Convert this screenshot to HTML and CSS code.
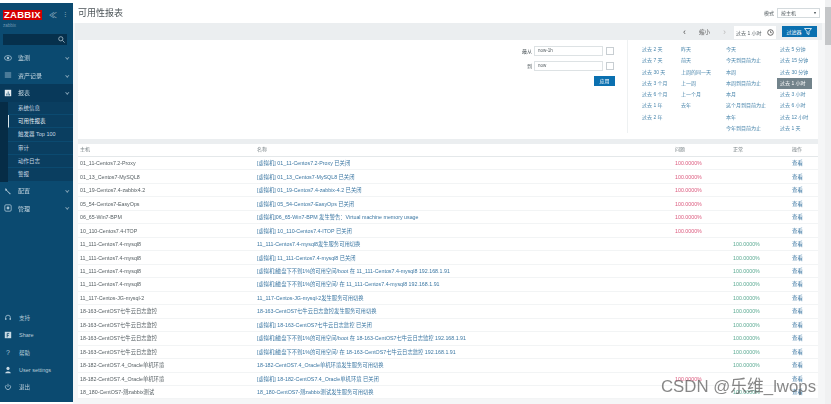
FILE: index.html
```html
<!DOCTYPE html>
<html lang="zh">
<head>
<meta charset="utf-8">
<title>可用性报表</title>
<link rel="stylesheet" href="styles.css">
</head>
<body>
<div class="app">
<aside class="side">
  <div class="brandrow">
    <span class="logo">ZABBIX</span>
    <span class="sidectl">≪</span><span class="sidectl small">⠇</span>
  </div>
  <div class="server">zabbix</div>
  <div class="search"><svg width="7" height="7" viewBox="0 0 8 8"><circle cx="3.2" cy="3.2" r="2.4" fill="none" stroke="#9fb6c4"/><path d="M5 5l2.5 2.5" stroke="#9fb6c4"/></svg></div>
  <nav class="menu">
    <div class="mi"><svg class="ic" viewBox="0 0 10 10"><ellipse cx="5" cy="5" rx="4.4" ry="3" fill="none" stroke="#a9c4d4"/><circle cx="5" cy="5" r="1.5" fill="#a9c4d4"/></svg><span>监测</span><i class="chev"></i></div>
    <div class="mi"><svg class="ic" viewBox="0 0 10 10"><path d="M1 2.500h8M1 5h8M1 7.500h8" stroke="#a9c4d4"/></svg><span>资产记录</span><i class="chev"></i></div>
    <div class="mi on"><svg class="ic" viewBox="0 0 10 10"><rect x="1" y="1" width="8" height="8" fill="#e8eef2"/><path d="M3 8V5.500h1V8zM4.700 8V3h1v5zM6.400 8V6h1v2z" fill="#245a7a"/></svg><span>报表</span><i class="chev up"></i></div>
    <div class="sub">
      <div class="si">系统信息</div>
      <div class="si cur">可用性报表</div>
      <div class="si">触发器 Top 100</div>
      <div class="si">审计</div>
      <div class="si">动作日志</div>
      <div class="si">警报</div>
    </div>
    <div class="mi"><svg class="ic" viewBox="0 0 10 10"><path d="M1.500 1.500l2 1 .5 2 4.500 4-1 1-4-4.500-2-.5z" fill="#a9c4d4"/></svg><span>配置</span><i class="chev"></i></div>
    <div class="mi"><svg class="ic" viewBox="0 0 10 10"><rect x="1" y="1" width="8" height="8" rx="1.500" fill="none" stroke="#a9c4d4"/><circle cx="5" cy="5" r="1.800" fill="#a9c4d4"/></svg><span>管理</span><i class="chev"></i></div>
  </nav>
  <div class="foot">
    <div class="fi"><svg class="ic" viewBox="0 0 10 10"><path d="M2 6V4.500a3 3 0 0 1 6 0V6" fill="none" stroke="#a9c4d4"/><rect x="1.500" y="5" width="1.500" height="2.500" fill="#a9c4d4"/><rect x="7" y="5" width="1.500" height="2.500" fill="#a9c4d4"/></svg><span>支持</span></div>
    <div class="fi"><svg class="ic" viewBox="0 0 10 10"><rect x="1" y="1" width="8" height="8" fill="#c9dae4"/><path d="M4 8V3h2.500M4 5.500h2" stroke="#0d4a6e" fill="none"/></svg><span>Share</span></div>
    <div class="fi"><span class="ic q">?</span><span>帮助</span></div>
    <div class="fi"><svg class="ic" viewBox="0 0 10 10"><circle cx="5" cy="3" r="2" fill="#c9dae4"/><path d="M1.500 9c0-3 7-3 7 0z" fill="#c9dae4"/></svg><span>User settings</span></div>
    <div class="fi"><svg class="ic" viewBox="0 0 10 10"><path d="M3 2.500a3.200 3.200 0 1 0 4 0M5 1v4" fill="none" stroke="#a9c4d4"/></svg><span>退出</span></div>
  </div>
</aside>
<main class="main">
  <header class="head">
    <h1>可用性报表</h1>
    <div class="mode"><label>模式</label><span class="sel">按主机<b>▾</b></span></div>
  </header>
  <div class="bar">
    <span class="arrow">‹</span><span class="zoom">缩小</span><span class="arrow dim">›</span>
    <span class="tab">过去 1 小时 <svg width="7" height="7" viewBox="0 0 8 8"><circle cx="4" cy="4" r="3.200" fill="none" stroke="#555"/><path d="M4 2v2.200h1.600" fill="none" stroke="#555" stroke-width=".8"/></svg></span>
    <span class="btnf">过滤器 <svg width="8" height="7" viewBox="0 0 8 7"><path d="M.5.500h7L5 3.500V6.500L3 5.500V3.500z" fill="none" stroke="#fff" stroke-width=".8"/></svg></span>
  </div>
  <section class="filter">
    <div class="range">
      <div class="frow"><label>最从</label><span class="inp">now-1h</span><span class="cal"></span></div>
      <div class="frow"><label>到</label><span class="inp">now</span><span class="cal"></span></div>
      <div class="frow applyrow"><span class="apply">应用</span></div>
    </div>
    <div class="quick">
      <ul class="q1"><li>过去 2 天</li><li>过去 7 天</li><li>过去 30 天</li><li>过去 3 个月</li><li>过去 6 个月</li><li>过去 1 年</li><li>过去 2 年</li></ul>
      <ul class="q2"><li>昨天</li><li>前天</li><li>上周的同一天</li><li>上一周</li><li>上一个月</li><li>去年</li></ul>
      <ul class="q3"><li>今天</li><li>今天到目前为止</li><li>本周</li><li>本周到目前为止</li><li>本月</li><li>这个月到目前为止</li><li>本年</li><li>今年到目前为止</li></ul>
      <ul class="q4"><li>过去 5 分钟</li><li>过去 15 分钟</li><li>过去 30 分钟</li><li class="act">过去 1 小时</li><li>过去 3 小时</li><li>过去 6 小时</li><li>过去 12 小时</li><li>过去 1 天</li></ul>
    </div>
  </section>
  <table class="tbl">
    <colgroup><col class="c1"><col class="c2"><col class="c3"><col class="c4"><col class="c5"></colgroup>
    <thead><tr><th>主机</th><th>名称</th><th>问题</th><th>正常</th><th>操作</th></tr></thead>
    <tbody>
      <tr><td>01_11-Centos7.2-Proxy</td><td class="l">[虚拟机] 01_11-Centos7.2-Proxy 已关闭</td><td class="r">100.0000%</td><td></td><td class="v">查看</td></tr>
      <tr><td>01_13_Centos7-MySQL8</td><td class="l">[虚拟机] 01_13_Centos7-MySQL8 已关闭</td><td class="r">100.0000%</td><td></td><td class="v">查看</td></tr>
      <tr><td>01_19-Centos7.4-zabbix4.2</td><td class="l">[虚拟机] 01_19-Centos7.4-zabbix-4.2 已关闭</td><td class="r">100.0000%</td><td></td><td class="v">查看</td></tr>
      <tr><td>05_54-Centos7-EasyOps</td><td class="l">[虚拟机] 05_54-Centos7-EasyOps 已关闭</td><td class="r">100.0000%</td><td></td><td class="v">查看</td></tr>
      <tr><td>06_65-Win7-BPM</td><td class="l">[虚拟机]06_65-Win7-BPM 发生警告：Virtual machine memory usage</td><td class="r">100.0000%</td><td></td><td class="v">查看</td></tr>
      <tr><td>10_110-Centos7.4-ITOP</td><td class="l">[虚拟机] 10_110-Centos7.4-ITOP 已关闭</td><td class="r">100.0000%</td><td></td><td class="v">查看</td></tr>
      <tr><td>11_111-Centos7.4-mysql8</td><td class="l">11_111-Centos7.4-mysql8发生服务可用切换</td><td></td><td class="g">100.0000%</td><td class="v">查看</td></tr>
      <tr><td>11_111-Centos7.4-mysql8</td><td class="l">[虚拟机] 11_111-Centos7.4-mysql8 已关闭</td><td></td><td class="g">100.0000%</td><td class="v">查看</td></tr>
      <tr><td>11_111-Centos7.4-mysql8</td><td class="l">[虚拟机]磁盘下不到1%的可用空间/boot 在 11_111-Centos7.4-mysql8 192.168.1.91</td><td></td><td class="g">100.0000%</td><td class="v">查看</td></tr>
      <tr><td>11_111-Centos7.4-mysql8</td><td class="l">[虚拟机]磁盘下不到1%的可用空间/ 在 11_111-Centos7.4-mysql8 192.168.1.91</td><td></td><td class="g">100.0000%</td><td class="v">查看</td></tr>
      <tr><td>11_117-Centos-JG-mysql-2</td><td class="l">11_117-Centos-JG-mysql-2发生服务可用切换</td><td></td><td class="g">100.0000%</td><td class="v">查看</td></tr>
      <tr><td>18-163-CentOS7七牛云日志监控</td><td class="l">18-163-CentOS7七牛云日志监控发生服务可用切换</td><td></td><td class="g">100.0000%</td><td class="v">查看</td></tr>
      <tr><td>18-163-CentOS7七牛云日志监控</td><td class="l">[虚拟机] 18-163-CentOS7七牛云日志监控 已关闭</td><td></td><td class="g">100.0000%</td><td class="v">查看</td></tr>
      <tr><td>18-163-CentOS7七牛云日志监控</td><td class="l">[虚拟机]磁盘下不到1%的可用空间/boot 在 18-163-CentOS7七牛云日志监控 192.168.1.91</td><td></td><td class="g">100.0000%</td><td class="v">查看</td></tr>
      <tr><td>18-163-CentOS7七牛云日志监控</td><td class="l">[虚拟机]磁盘下不到1%的可用空间/ 在 18-163-CentOS7七牛云日志监控 192.168.1.91</td><td></td><td class="g">100.0000%</td><td class="v">查看</td></tr>
      <tr><td>18-182-CentOS7.4_Oracle单机环境</td><td class="l">18-182-CentOS7.4_Oracle单机环境发生服务可用切换</td><td></td><td class="g">100.0000%</td><td class="v">查看</td></tr>
      <tr><td>18-182-CentOS7.4_Oracle单机环境</td><td class="l">[虚拟机] 18-182-CentOS7.4_Oracle单机环境 已关闭</td><td class="r">100.0000%</td><td></td><td class="v">查看</td></tr>
      <tr><td>18_180-CentOS7-测zabbix测试</td><td class="l">18_180-CentOS7-测zabbix测试发生服务可用切换</td><td></td><td class="g">100.0000%</td><td class="v">查看</td></tr>
    </tbody>
  </table>
</main>
<div class="scroll"><span class="thumb"></span></div>
</div>
<div class="mark">CSDN @乐维_lwops</div>
</body>
</html>
```
FILE: styles.css
```css
* { box-sizing: border-box; }
html, body { margin: 0; height: 404px; overflow: hidden; }
body { font: 5.5px "Liberation Sans", "Noto Sans CJK SC", sans-serif; color: #535c60; background: #fff; position: relative; }
.app { display: flex; height: 404px; filter: blur(.45px); }
.side { width: 73px; height: 399px; margin-top: 3px; flex: none; background: #0b4a70; color: #b9ccd8; display: flex; flex-direction: column; }
.brandrow { display: flex; align-items: center; padding: 5px 0 0 3px; height: 18px; }
.logo { background: #d40000; color: #fff; font-size: 9.5px; font-weight: bold; line-height: 10px; padding: 0 1px; letter-spacing: .25px; }
.sidectl { color: #9ab4c4; font-size: 8px; margin-left: 7px; }
.sidectl.small { font-size: 6px; }
.server { padding: 2px 3px 0; font-size: 4.5px; color: #6f97b0; height: 10px; }
.search { margin: 3px 6px 0 3px; height: 11px; background: #06304c; display: flex; align-items: center; justify-content: flex-end; padding-right: 2px; }
.menu { margin-top: 4px; }
.mi { height: 17.500px; display: flex; align-items: center; padding-left: 4px; color: #c8d8e2; font-size: 6px; position: relative; }
.mi.on { background: #08395a; }
.ic { width: 8px; height: 8px; margin-right: 6px; flex: none; }
.q { text-align: center; font-size: 7px; line-height: 8px; color: #a9c4d4; }
.chev { position: absolute; right: 5px; top: 7px; width: 2.500px; height: 2.500px; border-right: .7px solid #7fa0b4; border-bottom: .7px solid #7fa0b4; transform: rotate(45deg); }
.chev.up { transform: rotate(45deg); }
.sub { background: #062c46; padding-left: 8px; }
.si { height: 13.400px; line-height: 13.400px; padding-left: 10px; background: #0a3e60; color: #c8d8e2; border-bottom: 1px solid #0b4a70; font-size: 5.500px; }
.si.cur { border-left: 1px solid #d8e4ea; padding-left: 9px; color: #e8f0f4; }
.foot { margin-top: auto; padding-bottom: 6px; }
.fi { height: 17.300px; display: flex; align-items: center; padding-left: 4px; color: #b9ccd8; font-size: 5.500px; }
.fi .ic { margin-right: 7px; }
.main { flex: 1; min-width: 0; background: #f5f6f7; padding: 0 7px 0 5px; display: flex; flex-direction: column; }
.head { height: 23px; margin: 0 -7px 0 -5px; display: flex; align-items: center; justify-content: space-between; padding: 2px 5px 0 5px; background: #fff; }
.head h1 { margin: 0; font-size: 9px; font-weight: normal; color: #4c5458; }
.mode { display: flex; align-items: center; gap: 3px; font-size: 5px; }
.sel { width: 43px; height: 10px; border: 1px solid #d4dadd; display: flex; justify-content: space-between; align-items: center; padding: 0 3px; }
.sel b { font-size: 4px; }
.bar { height: 17px; margin: 0 -4px 0 -3px; padding-right: 5px; background: #ebeef0; display: flex; align-items: center; justify-content: flex-end; font-size: 5.500px; }
.arrow { font-size: 9px; color: #555; }
.arrow.dim { color: #bbb; margin: 0 8px 0 13px; }
.zoom { margin-left: 13px; color: #555; }
.tab { height: 13px; width: 42px; background: #fff; display: flex; align-items: center; justify-content: space-between; padding: 0 2px; margin-right: 6px; margin-top: 2px; font-size: 5px; }
.btnf { background: #0a70b0; color: #fff; width: 35px; height: 11px; display: flex; align-items: center; justify-content: space-around; padding: 0 3px; font-size: 5px; }
.filter { height: 99px; flex: none; background: #fff; display: flex; }
.range { width: 550px; padding-top: 5px; display: flex; flex-direction: column; gap: 4px; border-right: 1px solid #eef1f2; margin-bottom: 6px; }
.frow { display: flex; justify-content: flex-end; align-items: center; height: 11px; padding-right: 13px; gap: 2px; }
.frow label { font-size: 5px; }
.inp { width: 69px; height: 10px; border: 1px solid #dde2e4; line-height: 8px; padding-left: 3px; font-size: 4.500px; }
.cal { width: 8px; height: 8px; border: 1px solid #c8ced2; margin-left: 1px; }
.applyrow { height: 11px; }
.apply { width: 21px; height: 10px; background: #0a70b0; color: #fff; text-align: center; line-height: 10px; font-size: 5px; margin-right: -1px; }
.quick { flex: 1; display: flex; color: #4a86ac; font-size: 5px; padding: 4px 0 0 14px; }
.quick ul { margin: 0; padding: 0; list-style: none; }
.quick li { height: 11.300px; line-height: 11.300px; white-space: nowrap; }
.q1 { width: 39px; }
.q2 { width: 45px; }
.q3 { width: 54px; }
.q4 { width: 36px; }
.q4 .act { background: #72838b; color: #fff; margin-left: -3px; padding-left: 3px; width: 35px; }
.tbl { width: 740px; border-collapse: collapse; table-layout: fixed; border-top: 5px solid #ebeef0; }
.c1 { width: 177px; } .c2 { width: 418px; } .c3 { width: 58px; } .c4 { width: 59px; } .c5 { width: 28px; }
.tbl th { height: 15px; background: #fff; color: #7a8488; font-weight: normal; font-size: 5px; text-align: left; padding: 0 0 3px 2px; border-bottom: 1px solid #e4e8ea; }
.tbl td { height: 13.470px; padding: 0 0 0 2px; background: #fff; border-bottom: 1px solid #f2f4f5; white-space: nowrap; overflow: hidden; font-size: 5.300px; }
.tbl tr { height: 13.470px; }
.l { color: #3a76a2; }
.r { color: #dc5a7e; }
.g { color: #5aaa92; }
.v { color: #3a76a2; font-size: 5.500px !important; }
.scroll { width: 6px; flex: none; background: #f0f1f2; padding-top: 7px; }
.thumb { display: block; height: 38px; background: #c4c6c8; }
.mark { position: absolute; left: 661px; top: 373px; font-size: 16.800px; color: rgba(70,70,70,.65); white-space: nowrap; }
```
